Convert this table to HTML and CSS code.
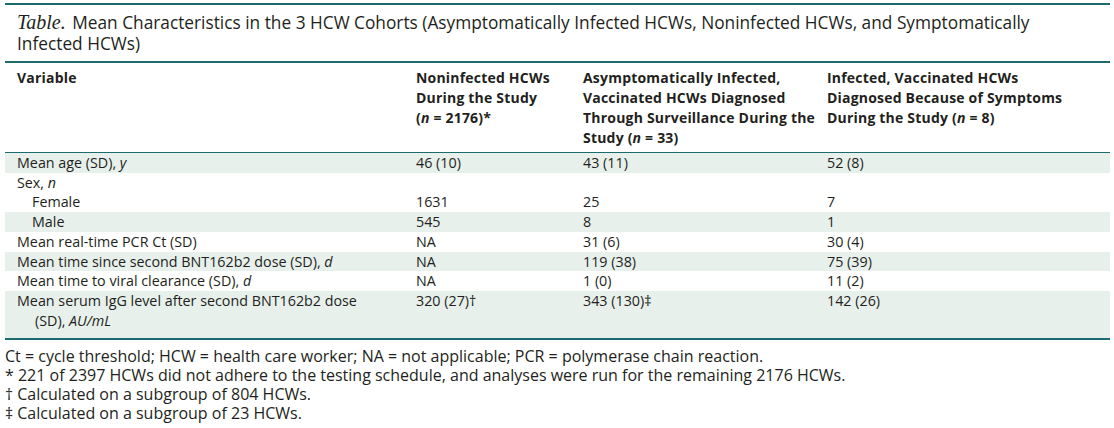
FILE: index.html
```html
<!DOCTYPE html>
<html lang="en">
<head>
<meta charset="utf-8">
<title>Table</title>
<link rel="stylesheet" href="styles.css">
</head>
<body>
<div class="wrap">
  <div class="caption"><span class="label">Table.</span> Mean Characteristics in the 3 HCW Cohorts (Asymptomatically Infected HCWs, Noninfected HCWs, and Symptomatically<br>Infected HCWs)</div>
  <table class="data">
    <colgroup>
      <col class="c1"><col class="c2"><col class="c3"><col class="c4">
    </colgroup>
    <thead>
      <tr>
        <th>Variable</th>
        <th>Noninfected HCWs<br>During the Study<br>(<i>n</i> = 2176)*</th>
        <th>Asymptomatically Infected,<br>Vaccinated HCWs Diagnosed<br>Through Surveillance During the<br>Study (<i>n</i> = 33)</th>
        <th>Infected, Vaccinated HCWs<br>Diagnosed Because of Symptoms<br>During the Study (<i>n</i> = 8)</th>
      </tr>
    </thead>
    <tbody>
      <tr class="shade"><td>Mean age (SD), <i>y</i></td><td>46 (10)</td><td>43 (11)</td><td>52 (8)</td></tr>
      <tr><td>Sex, <i>n</i></td><td></td><td></td><td></td></tr>
      <tr><td class="sub">Female</td><td>1631</td><td>25</td><td>7</td></tr>
      <tr class="shade"><td class="sub">Male</td><td>545</td><td>8</td><td>1</td></tr>
      <tr><td>Mean real-time PCR Ct (SD)</td><td>NA</td><td>31 (6)</td><td>30 (4)</td></tr>
      <tr class="shade"><td>Mean time since second BNT162b2 dose (SD), <i>d</i></td><td>NA</td><td>119 (38)</td><td>75 (39)</td></tr>
      <tr><td>Mean time to viral clearance (SD), <i>d</i></td><td>NA</td><td>1 (0)</td><td>11 (2)</td></tr>
      <tr class="shade last"><td class="hang">Mean serum IgG level after second BNT162b2 dose<br>(SD), <i>AU/mL</i></td><td>320 (27)†</td><td>343 (130)‡</td><td>142 (26)</td></tr>
    </tbody>
  </table>
  <div class="notes">
    <p>Ct = cycle threshold; HCW = health care worker; NA = not applicable; PCR = polymerase chain reaction.</p>
    <p>* 221 of 2397 HCWs did not adhere to the testing schedule, and analyses were run for the remaining 2176 HCWs.</p>
    <p>† Calculated on a subgroup of 804 HCWs.</p>
    <p>‡ Calculated on a subgroup of 23 HCWs.</p>
  </div>
</div>
</body>
</html>
```

FILE: styles.css
```css
html, body {
  margin: 0;
  padding: 0;
  background: #ffffff;
}

body {
  font-family: "Open Sans", "Noto Sans", "Liberation Sans", sans-serif;
  color: #231f20;
}

.wrap {
  width: 1105px;
  margin-left: 5px;
  padding-top: 3px;
}

.caption {
  border-top: 2px solid #1b6b6f;
  border-bottom: 2px solid #1b6b6f;
  padding: 7px 12px 7px 12px;
  font-size: 17.3px;
  line-height: 21px;
  white-space: nowrap;
}

.caption .label {
  font-family: "Liberation Serif", "DejaVu Serif", serif;
  font-style: italic;
  font-size: 20px;
  margin-right: 2px;
}

.data {
  width: 1105px;
  border-collapse: collapse;
  table-layout: fixed;
  font-size: 14.3px;
}

.c1 { width: 399px; }
.c2 { width: 167px; }
.c3 { width: 244px; }
.c4 { width: 295px; }

.data th {
  text-align: left;
  vertical-align: top;
  font-weight: 700;
  font-size: 14px;
  letter-spacing: 0.2px;
  line-height: 20px;
  padding: 5px 0 4px 12px;
  white-space: nowrap;
  border-bottom: 1px solid #1b6b6f;
}

.data td {
  vertical-align: top;
  line-height: 19.7px;
  padding: 0 12px;
  white-space: nowrap;
}

.data tr.shade td {
  background: #e8f0ec;
}

.data td.sub {
  padding-left: 27px;
}

.data td.hang {
  padding-left: 30px;
  text-indent: -18px;
}

.data tr.last td {
  padding-bottom: 7px;
  line-height: 20px;
  border-bottom: 2px solid #1b6b6f;
}

.notes {
  margin-top: 7px;
  font-size: 16px;
  line-height: 19px;
}

.notes p {
  margin: 0;
}
```
